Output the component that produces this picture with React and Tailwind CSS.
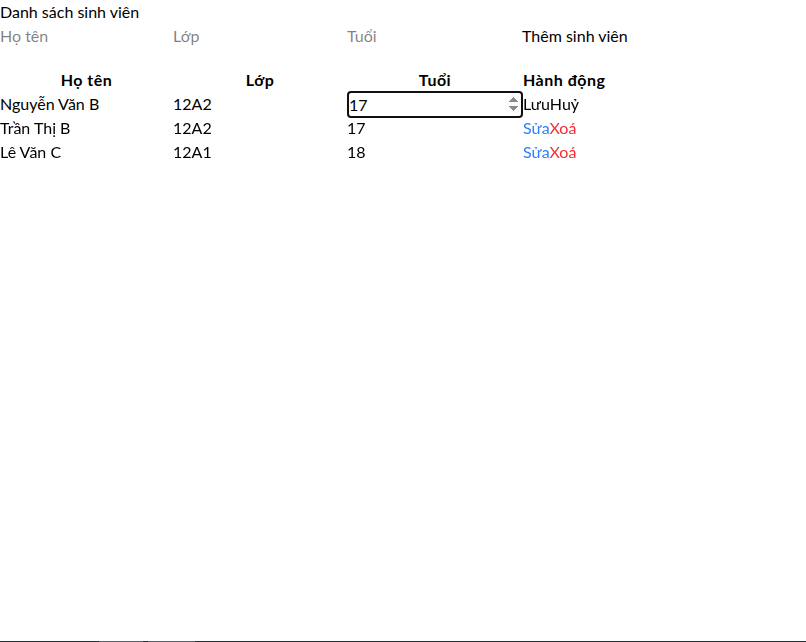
const STUDENTS = [
  { id: 1, name: "Nguyễn Văn B", className: "12A2", age: 17, editing: true },
  { id: 2, name: "Trần Thị B", className: "12A2", age: 17 },
  { id: 3, name: "Lê Văn C", className: "12A1", age: 18 },
];

export default function App() {
  return (
    <div className="bg-white text-black text-base leading-6 font-['Lato',sans-serif] min-h-screen flex flex-col">
      <h2>Danh sách sinh viên</h2>

      {/* Add form */}
      <div className="flex">
        <input className="w-[173px] outline-none" placeholder="Họ tên" />
        <input className="w-[174px] outline-none" placeholder="Lớp" />
        <input className="w-[175px] outline-none" type="number" placeholder="Tuổi" />
        <button>Thêm sinh viên</button>
      </div>

      <table className="mt-5 self-start">
        <thead className="tracking-[0.5px]">
          <tr>
            <th className="w-[173px]">Họ tên</th>
            <th className="w-[174px]">Lớp</th>
            <th className="w-[175px]">Tuổi</th>
            <th>Hành động</th>
          </tr>
        </thead>
        <tbody>
          {STUDENTS.map((s) =>
            s.editing ? (
              <tr key={s.id}>
                <td>{s.name}</td>
                <td>{s.className}</td>
                <td className="p-0">
                  <input
                    autoFocus
                    type="number"
                    defaultValue={s.age}
                    className="block w-[176px] h-[27px] -mt-px -mb-[2px] border-2 border-[#101010] rounded-[4px] outline-none"
                  />
                </td>
                <td>
                  <button>Lưu</button>
                  <button>Huỷ</button>
                </td>
              </tr>
            ) : (
              <tr key={s.id}>
                <td>{s.name}</td>
                <td>{s.className}</td>
                <td>{s.age}</td>
                <td>
                  <button className="text-blue-500">Sửa</button>
                  <button className="text-red-500">Xoá</button>
                </td>
              </tr>
            )
          )}
        </tbody>
      </table>

      {/* bottom strip */}
      <div className="mt-auto h-px flex bg-[#232d31]">
        <div className="w-[99px]" />
        <div className="w-[44px] bg-[#5a6064]" />
        <div className="w-[5px]" />
        <div className="w-[47px] bg-[#5a6064]" />
      </div>
    </div>
  );
}
